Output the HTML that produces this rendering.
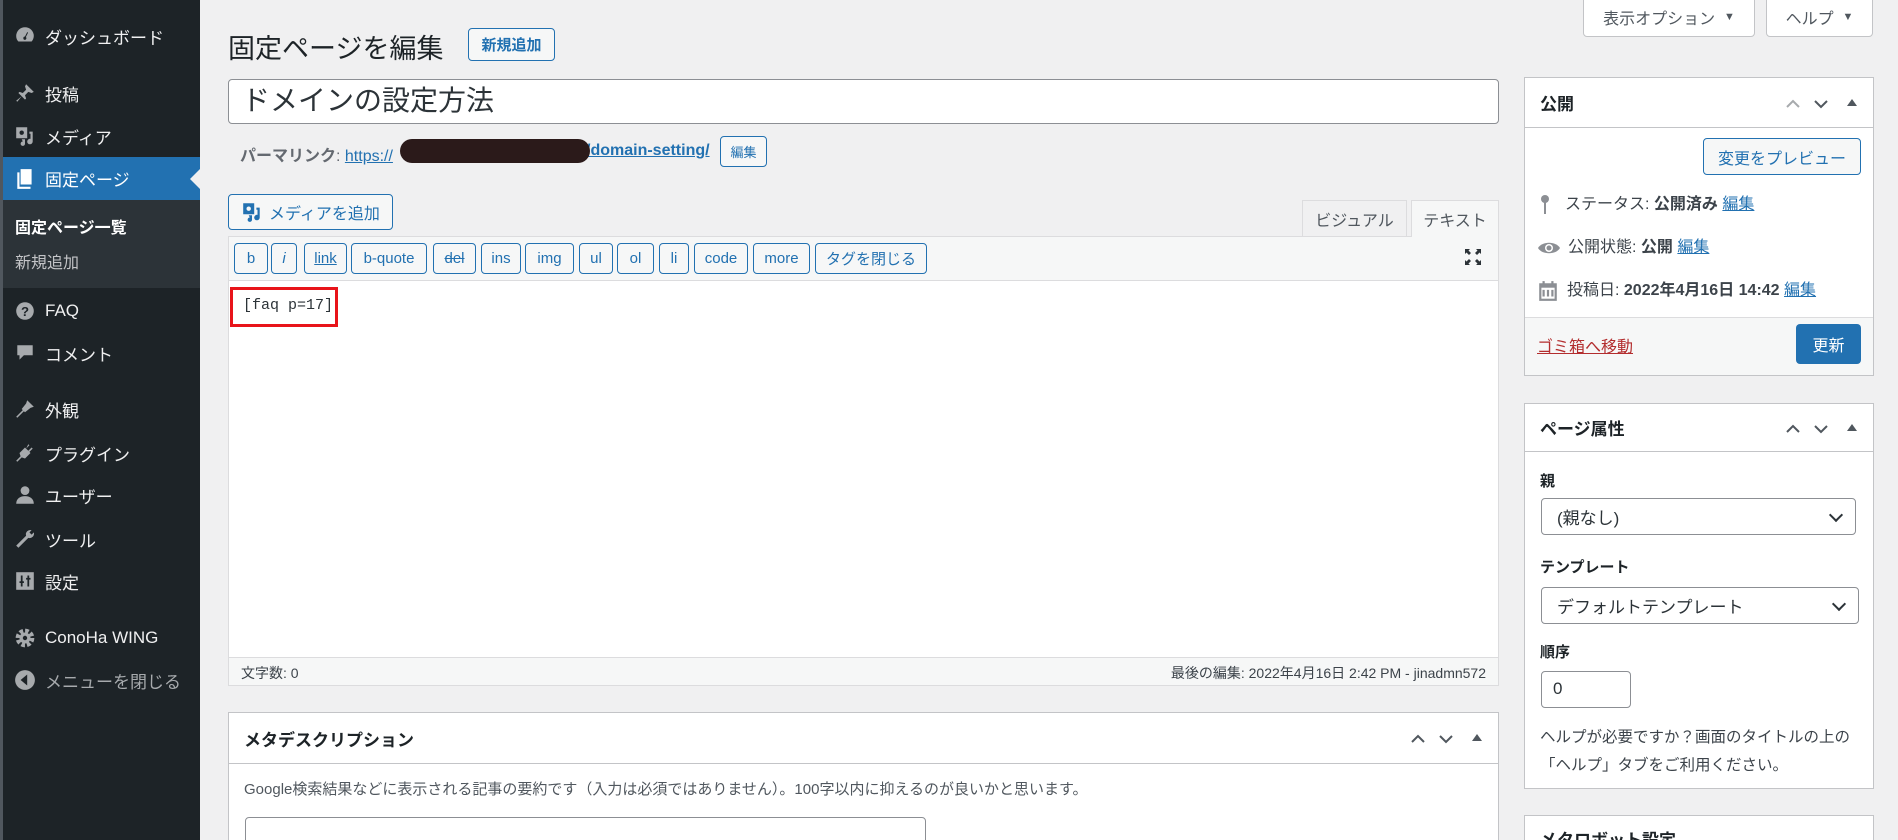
<!DOCTYPE html>
<html><head><meta charset="utf-8"><style>
*{box-sizing:border-box;margin:0;padding:0}
html,body{width:1898px;height:840px;overflow:hidden}
body{background:#f0f0f1;font-family:"Liberation Sans","Noto Sans CJK JP",sans-serif;font-size:16px;color:#3c434a;position:relative}
.abs{position:absolute}
#side{left:0;top:0;width:200px;height:840px;background:#1d2327;border-left:3px solid #50575e}
.mi{position:absolute;left:0;width:197px;height:40px;color:#f0f0f1;font-size:17px;display:flex;align-items:center}
.mi .ic{position:absolute;left:10px;width:24px;height:24px;display:flex;align-items:center;justify-content:center}
.mi .t{position:absolute;left:42px}
.btn{position:absolute;border:1px solid #2271b1;color:#2271b1;background:#f6f7f7;border-radius:4px;display:flex;align-items:center;justify-content:center;font-size:15px}
.box{position:absolute;background:#fff;border:1px solid #c3c4c7;overflow:hidden}
.hd{position:absolute;left:0;right:0;top:0;border-bottom:1px solid #c3c4c7;font-weight:bold;font-size:17px;color:#1d2327;display:flex;align-items:center;padding-left:15px}
.arr{position:absolute;right:14px;top:50%;transform:translateY(-50%);height:16px}
a{color:#2271b1;text-decoration:underline}
.sel{position:absolute;border:1px solid #8c8f94;border-radius:4px;background:#fff;font-size:17px;color:#2c3338;display:flex;align-items:center;padding-left:15px}
.sel:after{content:"";position:absolute;right:14px;top:50%;width:8px;height:8px;border-right:2px solid #2c3338;border-bottom:2px solid #2c3338;transform:translateY(-70%) rotate(45deg)}
</style></head><body>
<div id="side" class="abs">
<div class="mi" style="top:16px"><span class="ic"><svg width="22" height="22" viewBox="0 0 20 20"><path d="M10 2a8 8 0 0 0-8 8c0 2 .7 3.8 2 5h12a8 8 0 0 0 2-5 8 8 0 0 0-8-8zm0 11.5a1.5 1.5 0 1 1 0-3l2-4 .8.4-2 4A1.5 1.5 0 0 1 10 13.5z" fill="#a7aaad"/></svg></span><span class="t">ダッシュボード</span></div>
<div class="mi" style="top:73px"><span class="ic"><svg width="22" height="22" viewBox="0 0 20 20"><path d="M11 2l7 7-2 1-3-1-3 3 1 3-1 1-3-3-4 5-1-1 5-4-3-3 1-1 3 1 3-3-1-3z" fill="#a7aaad"/></svg></span><span class="t">投稿</span></div>
<div class="mi" style="top:116px"><span class="ic"><svg width="22" height="22" viewBox="0 0 20 20"><path d="M2 2h10v10H2zM14 6h3v9a2.5 2.5 0 1 1-2-2.4V8h-1zM7 13h3v4a2 2 0 1 1-2-2z" fill="#a7aaad"/><circle cx="7" cy="7" r="2" fill="#1d2327"/></svg></span><span class="t">メディア</span></div>
<div class="mi" style="top:157px;height:43px;background:#2271b1;color:#fff"><span class="ic"><svg width="22" height="22" viewBox="0 0 20 20"><path d="M6 1h10v14H6z M3 4h2v13h10v2H3z" fill="#fff"/></svg></span><span class="t">固定ページ</span><span style="position:absolute;right:0;top:12px;border:10px solid transparent;border-right-color:#f0f0f1;border-left:0"></span></div>
<div class="abs" style="left:0;top:200px;width:197px;height:88px;background:#2c3338"></div>
<div class="mi" style="top:206px;font-weight:bold;font-size:16px;color:#fff"><span class="t" style="left:12px">固定ページ一覧</span></div>
<div class="mi" style="top:241px;font-size:16px;color:#c3c4c7"><span class="t" style="left:12px">新規追加</span></div>
<div class="mi" style="top:291px"><span class="ic"><svg width="22" height="22" viewBox="0 0 20 20"><circle cx="10" cy="10" r="8" fill="#a7aaad"/><text x="10" y="14.5" font-size="12" font-weight="bold" text-anchor="middle" fill="#1d2327" font-family="Liberation Sans">?</text></svg></span><span class="t">FAQ</span></div>
<div class="mi" style="top:333px"><span class="ic"><svg width="22" height="22" viewBox="0 0 20 20"><path d="M3 3h14v9H9l-4 4v-4H3z" fill="#a7aaad"/></svg></span><span class="t">コメント</span></div>
<div class="mi" style="top:389px"><span class="ic"><svg width="22" height="22" viewBox="0 0 20 20"><path d="M12 2l6 6-3 1-5 4-1-1-6 6-1-1 6-6-1-1 4-5z" fill="#a7aaad"/></svg></span><span class="t">外観</span></div>
<div class="mi" style="top:433px"><span class="ic"><svg width="22" height="22" viewBox="0 0 20 20"><path d="M13 2l1 1-3 3 2 2 3-3 1 1-3 3 1 1-5 5-3-1-4 4-1-1 4-4-1-3 5-5 1 1z" fill="#a7aaad"/></svg></span><span class="t">プラグイン</span></div>
<div class="mi" style="top:475px"><span class="ic"><svg width="22" height="22" viewBox="0 0 20 20"><circle cx="10" cy="6" r="4" fill="#a7aaad"/><path d="M2 18c0-5 4-7 8-7s8 2 8 7z" fill="#a7aaad"/></svg></span><span class="t">ユーザー</span></div>
<div class="mi" style="top:519px"><span class="ic"><svg width="22" height="22" viewBox="0 0 20 20"><path d="M16 2a4 4 0 0 0-5 5L2 16l2 2 9-9a4 4 0 0 0 5-5l-2 2-2-2z" fill="#a7aaad"/></svg></span><span class="t">ツール</span></div>
<div class="mi" style="top:561px"><span class="ic"><svg width="22" height="22" viewBox="0 0 20 20"><rect x="2" y="2" width="16" height="16" fill="#a7aaad"/><path d="M7 5v10M13 5v10M5 11h4M11 8h4" stroke="#1d2327" stroke-width="1.6"/></svg></span><span class="t">設定</span></div>
<div class="mi" style="top:618px"><span class="ic"><svg width="22" height="22" viewBox="0 0 20 20"><circle cx="10" cy="10" r="6" fill="none" stroke="#a7aaad" stroke-width="5" stroke-dasharray="3 1.7"/><circle cx="10" cy="10" r="5" fill="#a7aaad"/><circle cx="10" cy="10" r="2" fill="#1d2327"/></svg></span><span class="t">ConoHa WING</span></div>
<div class="mi" style="top:660px;color:#a7aaad"><span class="ic"><svg width="22" height="22" viewBox="0 0 20 20"><circle cx="10" cy="10" r="9" fill="#a7aaad"/><path d="M12 5v10l-6-5z" fill="#1d2327"/></svg></span><span class="t">メニューを閉じる</span></div>
</div>

<svg width="0" height="0" style="position:absolute"><defs>
<g id="ar"><path d="M2 12l6-6 6 6" fill="none" stroke="currentColor" stroke-width="2"/><path d="M30 6l6 6 6-6" fill="none" stroke="#50575e" stroke-width="2"/><path d="M62 11l5-7 5 7z" fill="#50575e"/></g>
</defs></svg>

<div class="abs" style="left:1583px;top:-4px;width:172px;height:41px;background:#fff;border:1px solid #c3c4c7;border-radius:0 0 4px 4px;display:flex;align-items:center;justify-content:center;font-size:16px;color:#50575e">表示オプション&nbsp;&nbsp;<span style="font-size:11px">▼</span></div>
<div class="abs" style="left:1766px;top:-4px;width:107px;height:41px;background:#fff;border:1px solid #c3c4c7;border-radius:0 0 4px 4px;display:flex;align-items:center;justify-content:center;font-size:16px;color:#50575e">ヘルプ&nbsp;&nbsp;<span style="font-size:11px">▼</span></div>

<div class="abs" style="left:228px;top:27px;font-size:27px;color:#1d2327">固定ページを編集</div>
<div class="btn" style="left:468px;top:28px;width:87px;height:33px;font-weight:bold;font-size:15px">新規追加</div>

<div class="abs" style="left:228px;top:79px;width:1271px;height:45px;background:#fff;border:1px solid #8c8f94;border-radius:4px;font-size:28px;color:#2c3338;padding-left:13px;line-height:42px">ドメインの設定方法</div>
<div class="abs" style="left:240px;top:142px;font-size:16px;color:#646970"><b>パーマリンク</b>: <a>https://</a></div>
<div class="abs" style="left:586px;top:142px;font-size:16px"><a><b>/domain-setting/</b></a></div>
<div class="abs" style="left:400px;top:139px;width:190px;height:24px;background:#2b1a1a;border-radius:12px"></div>
<div class="btn" style="left:720px;top:136px;width:47px;height:31px;font-size:13px">編集</div>

<div class="btn" style="left:228px;top:194px;width:165px;height:36px;font-size:16px"><svg width="22" height="22" viewBox="0 0 20 20" style="margin-right:6px"><path d="M2 2h10v10H2zM14 6h3v9a2.5 2.5 0 1 1-2-2.4V8h-1zM7 13h3v4a2 2 0 1 1-2-2z" fill="#2271b1"/><circle cx="7" cy="7" r="2" fill="#f6f7f7"/></svg>メディアを追加</div>
<div class="abs" style="left:1302px;top:200px;width:105px;height:36px;background:#f0f0f1;border:1px solid #dcdcde;border-bottom:0;font-size:16px;color:#50575e;display:flex;align-items:center;justify-content:center">ビジュアル</div>
<div class="abs" style="left:1411px;top:200px;width:88px;height:37px;background:#f6f7f7;border:1px solid #dcdcde;border-bottom:0;font-size:16px;color:#50575e;display:flex;align-items:center;justify-content:center;z-index:2">テキスト</div>

<div class="abs" style="left:228px;top:236px;width:1271px;height:450px;background:#fff;border:1px solid #dcdcde"></div>
<div class="abs" style="left:229px;top:237px;width:1269px;height:44px;background:#f6f7f7;border-bottom:1px solid #dcdcde"></div>
<div class="btn" style="left:234px;top:243px;width:34px;height:31px">b</div>
<div class="btn" style="left:271px;top:243px;width:26px;height:31px;font-style:italic">i</div>
<div class="btn" style="left:304px;top:243px;width:43px;height:31px;text-decoration:underline">link</div>
<div class="btn" style="left:351px;top:243px;width:76px;height:31px">b-quote</div>
<div class="btn" style="left:433px;top:243px;width:43px;height:31px;text-decoration:line-through">del</div>
<div class="btn" style="left:481px;top:243px;width:40px;height:31px">ins</div>
<div class="btn" style="left:525px;top:243px;width:49px;height:31px">img</div>
<div class="btn" style="left:579px;top:243px;width:34px;height:31px">ul</div>
<div class="btn" style="left:617px;top:243px;width:37px;height:31px">ol</div>
<div class="btn" style="left:659px;top:243px;width:30px;height:31px">li</div>
<div class="btn" style="left:694px;top:243px;width:54px;height:31px">code</div>
<div class="btn" style="left:753px;top:243px;width:57px;height:31px">more</div>
<div class="btn" style="left:815px;top:243px;width:112px;height:31px">タグを閉じる</div>
<svg class="abs" style="left:1463px;top:247px" width="20" height="20" viewBox="0 0 20 20"><path d="M2 2h5L5.5 3.5 8 6 6 8 3.5 5.5 2 7zM18 2v5l-1.5-1.5L14 8l-2-2 2.5-2.5L13 2zM2 18v-5l1.5 1.5L6 12l2 2-2.5 2.5L7 18zM18 18h-5l1.5-1.5L12 14l2-2 2.5 2.5L18 13z" fill="#2c3338"/></svg>
<div class="abs" style="left:230px;top:287px;width:108px;height:40px;border:3px solid #e8141a"></div>
<div class="abs" style="left:243px;top:297px;font-family:'Liberation Mono',monospace;font-size:15px;color:#2c3338">[faq p=17]</div>
<div class="abs" style="left:229px;top:657px;width:1269px;height:28px;background:#f6f7f7;border-top:1px solid #dcdcde;font-size:14px;color:#3c434a">
<span class="abs" style="left:12px;top:5px">文字数: 0</span><span class="abs" style="right:12px;top:5px">最後の編集: 2022年4月16日 2:42 PM - jinadmn572</span></div>

<div class="box" style="left:228px;top:712px;width:1271px;height:140px">
<div class="hd" style="height:51px">メタデスクリプション<svg class="arr" width="74" height="16" style="color:#50575e"><use href="#ar"/></svg></div>
<div class="abs" style="left:15px;top:65px;font-size:15px;color:#50575e">Google検索結果などに表示される記事の要約です（入力は必須ではありません）。100字以内に抑えるのが良いかと思います。</div>
<div class="abs" style="left:16px;top:104px;width:681px;height:40px;border:1px solid #8c8f94;border-radius:4px"></div>
</div>

<div class="box" style="left:1524px;top:77px;width:350px;height:299px">
<div class="hd" style="height:50px">公開<svg class="arr" width="74" height="16" style="color:#a7aaad"><use href="#ar"/></svg></div>
<div class="btn" style="left:178px;top:60px;width:158px;height:37px;font-size:16px">変更をプレビュー</div>
<div class="abs" style="left:12px;top:112px;font-size:16px"><svg width="16" height="22" viewBox="0 0 16 22" style="vertical-align:middle;margin-right:12px"><circle cx="8" cy="5" r="4" fill="#8c8f94"/><rect x="7" y="8" width="2" height="12" fill="#8c8f94"/></svg>ステータス: <b>公開済み</b> <a>編集</a></div>
<div class="abs" style="left:12px;top:155px;font-size:16px"><svg width="24" height="16" viewBox="0 0 24 16" style="vertical-align:middle;margin-right:7px"><path d="M1 8C5 1 19 1 23 8 19 15 5 15 1 8z" fill="#8c8f94"/><circle cx="12" cy="8" r="4" fill="#fff"/><circle cx="12" cy="8" r="2.5" fill="#8c8f94"/></svg>公開状態: <b>公開</b> <a>編集</a></div>
<div class="abs" style="left:12px;top:198px;font-size:16px"><svg width="22" height="22" viewBox="0 0 20 20" style="vertical-align:middle;margin-right:8px"><path d="M2 3h16v16H2z" fill="#8c8f94"/><rect x="4" y="7" width="12" height="10" fill="#fff"/><path d="M6 9v6M10 9v6M14 9v6" stroke="#8c8f94" stroke-width="2"/><rect x="5" y="1" width="2" height="4" fill="#8c8f94"/><rect x="13" y="1" width="2" height="4" fill="#8c8f94"/></svg>投稿日: <b>2022年4月16日 14:42</b> <a>編集</a></div>
<div class="abs" style="left:0;top:239px;width:348px;height:58px;background:#f6f7f7;border-top:1px solid #dcdcde"></div>
<div class="abs" style="left:12px;top:255px;font-size:16px"><a style="color:#b32d2e">ゴミ箱へ移動</a></div>
<div class="abs" style="left:271px;top:246px;width:65px;height:40px;background:#2271b1;border-radius:4px;color:#fff;font-size:16px;display:flex;align-items:center;justify-content:center">更新</div>
</div>

<div class="box" style="left:1524px;top:403px;width:350px;height:386px">
<div class="hd" style="height:48px">ページ属性<svg class="arr" width="74" height="16" style="color:#50575e"><use href="#ar"/></svg></div>
<div class="abs" style="left:15px;top:66px;font-weight:bold;font-size:15px;color:#1d2327">親</div>
<div class="sel" style="left:16px;top:94px;width:315px;height:37px">(親なし)</div>
<div class="abs" style="left:15px;top:152px;font-weight:bold;font-size:15px;color:#1d2327">テンプレート</div>
<div class="sel" style="left:16px;top:183px;width:318px;height:37px">デフォルトテンプレート</div>
<div class="abs" style="left:15px;top:237px;font-weight:bold;font-size:15px;color:#1d2327">順序</div>
<div class="abs" style="left:16px;top:267px;width:90px;height:37px;border:1px solid #8c8f94;border-radius:4px;font-size:17px;color:#2c3338;padding:7px 0 0 11px">0</div>
<div class="abs" style="left:15px;top:320px;width:330px;font-size:15.5px;line-height:28px;color:#3c434a">ヘルプが必要ですか？画面のタイトルの上の「ヘルプ」タブをご利用ください。</div>
</div>

<div class="box" style="left:1524px;top:815px;width:350px;height:40px">
<div class="hd" style="height:50px;align-items:flex-start;padding-top:10px">メタロボット設定</div>
</div>
</body></html>
